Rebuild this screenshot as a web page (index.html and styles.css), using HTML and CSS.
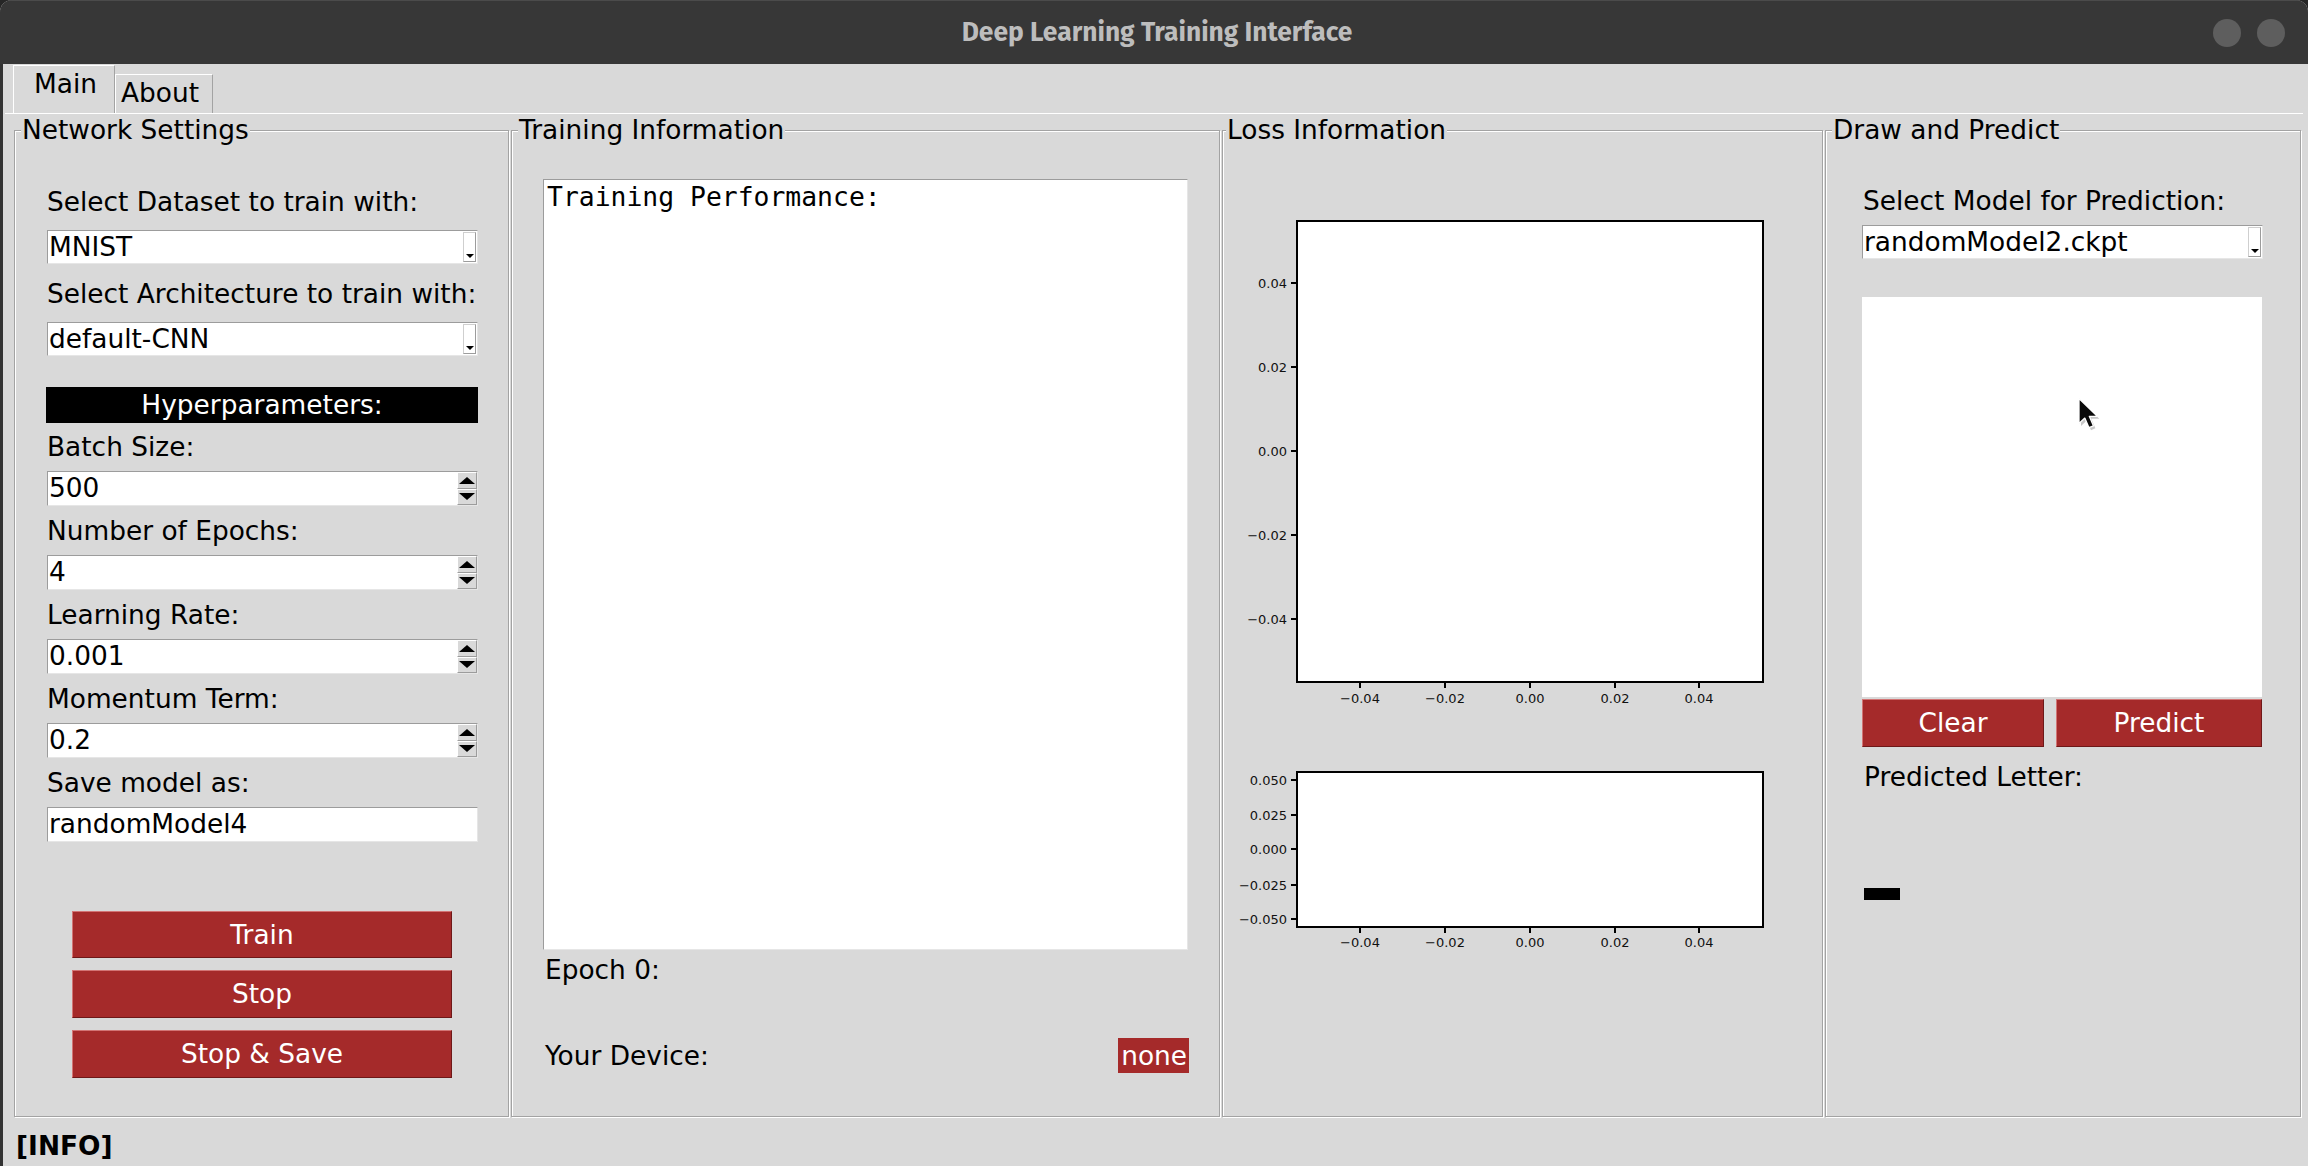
FILE: index.html
```html
<!DOCTYPE html>
<html>
<head>
<meta charset="utf-8">
<title>Deep Learning Training Interface</title>
<link rel="stylesheet" href="styles.css">
</head>
<body>
<div class="window">
  <div class="titlebar">
    <div></div>
    <div class="title">Deep Learning Training Interface</div>
    <div class="wbtns"><span class="dot"></span><span class="dot"></span></div>
  </div>
  <div class="main">
    <div class="tabs">
      <div class="tab active">Main</div>
      <div class="tab about">About</div>
    </div>
    <div class="pane">
      <div class="frames">
        <div class="frame f1">
          <div class="legend">Network Settings</div>
          <div class="fbody">
            <div class="lbl first">Select Dataset to train with:</div>
            <div class="combo"><span class="val">MNIST</span><span class="carrow"></span></div>
            <div class="lbl second">Select Architecture to train with:</div>
            <div class="combo"><span class="val">default-CNN</span><span class="carrow"></span></div>
            <div class="hyper">Hyperparameters:</div>
            <div class="lbl after-hyper">Batch Size:</div>
            <div class="spin"><span class="val">500</span><span class="spinbtns"><span class="sb up"></span><span class="sb down"></span></span></div>
            <div class="lbl">Number of Epochs:</div>
            <div class="spin"><span class="val">4</span><span class="spinbtns"><span class="sb up"></span><span class="sb down"></span></span></div>
            <div class="lbl">Learning Rate:</div>
            <div class="spin"><span class="val">0.001</span><span class="spinbtns"><span class="sb up"></span><span class="sb down"></span></span></div>
            <div class="lbl">Momentum Term:</div>
            <div class="spin"><span class="val">0.2</span><span class="spinbtns"><span class="sb up"></span><span class="sb down"></span></span></div>
            <div class="lbl">Save model as:</div>
            <div class="entry"><span class="val">randomModel4</span></div>
            <div class="btn wide train">Train</div>
            <div class="btn wide">Stop</div>
            <div class="btn wide">Stop &amp; Save</div>
          </div>
        </div>

        <div class="frame f2">
          <div class="legend">Training Information</div>
          <div class="fbody">
            <div class="textarea">Training Performance:</div>
            <div class="lbl epoch">Epoch 0:</div>
            <div class="device-row">
              <span class="lbl-inline">Your Device:</span>
              <span class="badge">none</span>
            </div>
          </div>
        </div>

        <div class="frame f3">
          <div class="legend">Loss Information</div>
          <div class="fbody">
            <svg class="figure" width="599" height="800" viewBox="0 0 599 800">
              <g class="axes" shape-rendering="crispEdges">
                <rect x="74" y="61" width="466" height="461" fill="#fff" stroke="#000" stroke-width="2"/>
                <line x1="68" y1="123" x2="74" y2="123"/>
                <line x1="68" y1="207" x2="74" y2="207"/>
                <line x1="68" y1="291" x2="74" y2="291"/>
                <line x1="68" y1="375" x2="74" y2="375"/>
                <line x1="68" y1="459" x2="74" y2="459"/>
                <line x1="137" y1="522" x2="137" y2="528"/>
                <line x1="222" y1="522" x2="222" y2="528"/>
                <line x1="307" y1="522" x2="307" y2="528"/>
                <line x1="392" y1="522" x2="392" y2="528"/>
                <line x1="476" y1="522" x2="476" y2="528"/>

                <rect x="74" y="612" width="466" height="155" fill="#fff" stroke="#000" stroke-width="2"/>
                <line x1="68" y1="620" x2="74" y2="620"/>
                <line x1="68" y1="655" x2="74" y2="655"/>
                <line x1="68" y1="689" x2="74" y2="689"/>
                <line x1="68" y1="725" x2="74" y2="725"/>
                <line x1="68" y1="759" x2="74" y2="759"/>
                <line x1="137" y1="767" x2="137" y2="773"/>
                <line x1="222" y1="767" x2="222" y2="773"/>
                <line x1="307" y1="767" x2="307" y2="773"/>
                <line x1="392" y1="767" x2="392" y2="773"/>
                <line x1="476" y1="767" x2="476" y2="773"/>
              </g>
              <g class="ylab">
                <text x="64" y="123">0.04</text>
                <text x="64" y="207">0.02</text>
                <text x="64" y="291">0.00</text>
                <text x="64" y="375">&#8722;0.02</text>
                <text x="64" y="459">&#8722;0.04</text>
                <text x="64" y="620">0.050</text>
                <text x="64" y="655">0.025</text>
                <text x="64" y="689">0.000</text>
                <text x="64" y="725">&#8722;0.025</text>
                <text x="64" y="759">&#8722;0.050</text>
              </g>
              <g class="xlab">
                <text x="137" y="543">&#8722;0.04</text>
                <text x="222" y="543">&#8722;0.02</text>
                <text x="307" y="543">0.00</text>
                <text x="392" y="543">0.02</text>
                <text x="476" y="543">0.04</text>
                <text x="137" y="787">&#8722;0.04</text>
                <text x="222" y="787">&#8722;0.02</text>
                <text x="307" y="787">0.00</text>
                <text x="392" y="787">0.02</text>
                <text x="476" y="787">0.04</text>
              </g>
            </svg>
          </div>
        </div>

        <div class="frame f4">
          <div class="legend">Draw and Predict</div>
          <div class="fbody">
            <div class="lbl sel-model">Select Model for Prediction:</div>
            <div class="combo"><span class="val">randomModel2.ckpt</span><span class="carrow"></span></div>
            <div class="canvas">
              <svg class="cursor" width="26" height="36" viewBox="0 0 26 36">
                <path d="M4 4 L4 29 L9.8 23.6 L14 33.2 L18.4 31.3 L14.3 21.8 L22.3 21.8 Z" fill="#000" opacity="0.22"/>
                <path d="M2 1.5 L2 26.5 L7.8 21.1 L12 30.7 L16.4 28.8 L12.3 19.3 L20.3 19.3 Z" fill="#0a0a0a" stroke="#fff" stroke-width="1.3" stroke-linejoin="round"/>
              </svg>
            </div>
            <div class="btnrow">
              <div class="btn clear">Clear</div>
              <div class="btn predict">Predict</div>
            </div>
            <div class="lbl pred-lbl">Predicted Letter:</div>
            <div class="dash"></div>
          </div>
        </div>
      </div>
    </div>
    <div class="status">[INFO]</div>
  </div>
</div>
</body>
</html>
```

FILE: styles.css
```css
html, body {
  margin: 0;
  padding: 0;
  background: #262626;
}

body {
  width: 2308px;
  height: 1166px;
  overflow: hidden;
  font-family: "DejaVu Sans", "Liberation Sans", sans-serif;
  font-size: 26.4px;
  color: #000;
}

.window {
  width: 2308px;
  height: 1166px;
  background: #d9d9d9;
  border-radius: 12px 12px 0 0;
  overflow: hidden;
  display: flex;
  flex-direction: column;
}

/* ---------- title bar ---------- */
.titlebar {
  height: 64px;
  flex: none;
  box-sizing: border-box;
  background: #373737;
  border-top: 1px solid #4b4b4b;
  display: grid;
  grid-template-columns: 1fr auto 1fr;
  align-items: center;
}

.title {
  font-family: "Fira Sans", Roboto, "Liberation Sans", sans-serif;
  font-weight: 700;
  font-size: 26.4px;
  color: #bdbdbd;
  padding: 0 0 2px 6px;
}

.wbtns {
  justify-self: end;
  display: flex;
  gap: 16px;
  margin-right: 23px;
}

.dot {
  width: 28px;
  height: 28px;
  border-radius: 50%;
  background: #5e5e5e;
}

/* ---------- main ---------- */
.main {
  flex: 1;
  border-left: 3px solid #333;
  display: flex;
  flex-direction: column;
}

.tabs {
  height: 49px;
  flex: none;
  display: flex;
  align-items: flex-end;
  padding-left: 10px;
}

.tab {
  box-sizing: border-box;
  line-height: 30px;
  border-top: 1px solid #fff;
  border-left: 1px solid #fff;
  border-right: 1px solid #a3a3a3;
  white-space: nowrap;
}

.tab.active {
  width: 102px;
  height: 48px;
  padding: 3px 0 0 20px;
}

.tab.about {
  width: 98px;
  height: 39px;
  padding: 3px 0 0 5px;
}

.pane {
  border-top: 1px solid #fff;
  margin: 0 5px 0 2px;
  padding-top: 1px;
}

.frames {
  display: grid;
  grid-template-columns: 495px 709px 601px 476px;
  column-gap: 2px;
  padding-left: 9px;
}

.frame {
  box-sizing: border-box;
  height: 987px;
  margin-top: 15px;
  border: 1px solid #a3a3a3;
  box-shadow: inset 1px 1px 0 #fff, 1px 1px 0 #fff;
  display: flex;
  flex-direction: column;
}

.legend {
  align-self: flex-start;
  margin: -16px 0 0 6px;
  padding: 0 1px;
  line-height: 30px;
  background: #d9d9d9;
  white-space: nowrap;
}

.f3 .legend {
  margin-left: 3px;
}

.fbody {
  display: flex;
  flex-direction: column;
}

/* ---------- network settings ---------- */
.f1 .fbody {
  padding: 0 30px 0 32px;
}

.lbl {
  line-height: 30px;
  margin-top: 10px;
  white-space: nowrap;
}

.lbl.first { margin-top: 42px; }
.lbl.second { margin-top: 15px; }
.lbl.after-hyper { margin-top: 9px; }

.combo, .spin, .entry {
  box-sizing: border-box;
  background: #fff;
  border: 1px solid;
  border-color: #9c9c9c #e6e6e6 #e6e6e6 #9c9c9c;
  display: flex;
  margin-top: 9px;
}

.combo {
  height: 34px;
  margin-top: 13px;
}

.spin, .entry {
  height: 35px;
}

.val {
  line-height: 32px;
  padding-left: 1px;
  white-space: nowrap;
}

.carrow {
  width: 13px;
  margin: 1px 1px 1px auto;
  border: 1px solid #cfcfcf;
  border-right-color: #9c9c9c;
  border-bottom-color: #9c9c9c;
  background: #fff;
  display: flex;
  align-items: flex-end;
  justify-content: center;
  padding-bottom: 3px;
  box-sizing: border-box;
}

.carrow::after {
  content: "";
  border-left: 4px solid transparent;
  border-right: 4px solid transparent;
  border-top: 4px solid #000;
}

.spinbtns {
  width: 20px;
  margin: 0 0 0 auto;
  display: flex;
  flex-direction: column;
}

.sb {
  flex: 1;
  box-sizing: border-box;
  background: #d9d9d9;
  border: 1px solid;
  border-color: #fff #9c9c9c #9c9c9c #fff;
  display: flex;
  align-items: center;
  justify-content: center;
}

.sb.up::after {
  content: "";
  border-left: 8px solid transparent;
  border-right: 8px solid transparent;
  border-bottom: 7px solid #000;
}

.sb.down::after {
  content: "";
  border-left: 8px solid transparent;
  border-right: 8px solid transparent;
  border-top: 7px solid #000;
}

.hyper {
  margin-top: 31px;
  margin-left: -1px;
  height: 36px;
  line-height: 36px;
  background: #000;
  color: #fff;
  text-align: center;
}

.btn {
  box-sizing: border-box;
  background: #a52a2a;
  color: #fff;
  text-align: center;
  border: 1px solid;
  border-color: #d27474 #6e1818 #6e1818 #d27474;
  white-space: nowrap;
}

.btn.wide {
  width: 380px;
  height: 48px;
  line-height: 45px;
  margin: 12px 0 0 25px;
}

.btn.train {
  margin-top: 69px;
  height: 47px;
}

/* ---------- training info ---------- */
.f2 .fbody {
  padding: 0 31px;
}

.textarea {
  margin-top: 34px;
  height: 771px;
  box-sizing: border-box;
  background: #fff;
  border: 1px solid;
  border-color: #9c9c9c #e6e6e6 #e6e6e6 #9c9c9c;
  font-family: "DejaVu Sans Mono", "Liberation Mono", monospace;
  font-size: 26.4px;
  line-height: 30px;
  padding: 2px 0 0 3px;
}

.lbl.epoch {
  margin-top: 5px;
  padding-left: 2px;
}

.device-row {
  margin-top: 53px;
  height: 35px;
  display: flex;
  align-items: center;
  justify-content: space-between;
  padding-left: 2px;
}

.lbl-inline {
  line-height: 30px;
}

.badge {
  background: #a52a2a;
  color: #fff;
  line-height: 35px;
  padding: 0 2px 0 3px;
  margin-right: -1px;
}

/* ---------- loss info ---------- */
.figure {
  display: block;
  margin-top: 15px;
}

.axes line {
  stroke: #000;
  stroke-width: 1.5;
}

.ylab text, .xlab text {
  font-family: "DejaVu Sans", sans-serif;
  font-size: 13px;
  fill: #111;
}

.ylab text {
  text-anchor: end;
  dominant-baseline: central;
}

.xlab text {
  text-anchor: middle;
}

/* ---------- draw & predict ---------- */
.f4 .fbody {
  padding: 0 37px 0 36px;
}

.lbl.sel-model {
  margin-top: 41px;
  padding-left: 1px;
}

.f4 .combo {
  margin-top: 9px;
}

.canvas {
  margin-top: 38px;
  width: 400px;
  height: 400px;
  background: #fff;
  position: relative;
}

.cursor {
  position: absolute;
  left: 215px;
  top: 100px;
}

.btnrow {
  margin-top: 2px;
  display: flex;
  gap: 12px;
  width: 400px;
}

.btn.clear {
  width: 182px;
  height: 48px;
  line-height: 45px;
}

.btn.predict {
  width: 206px;
  height: 48px;
  line-height: 45px;
}

.lbl.pred-lbl {
  margin-top: 15px;
  padding-left: 2px;
}

.dash {
  margin: 96px 0 0 2px;
  width: 36px;
  height: 12px;
  background: #000;
}

/* ---------- status ---------- */
.status {
  margin: 14px 0 0 13px;
  font-weight: 700;
  line-height: 30px;
}
```
